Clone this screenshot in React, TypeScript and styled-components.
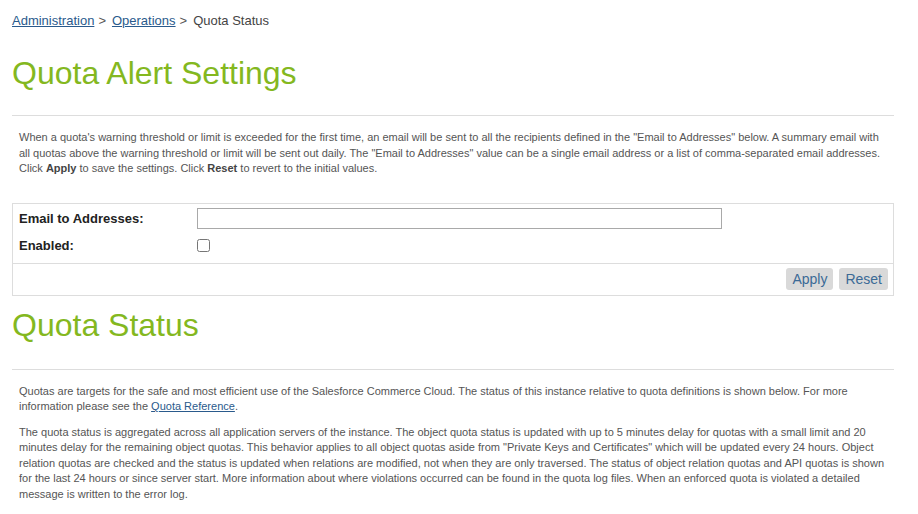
import React, { useState } from 'react';
import styled, { createGlobalStyle } from 'styled-components';

const GlobalStyle = createGlobalStyle`
  html, body {
    margin: 0;
    padding: 0;
    background: #ffffff;
    font-family: "Liberation Sans", Arial, sans-serif;
  }
`;

const Page = styled.div`
  width: 882px;
  padding: 13px 0 0 12px;
`;

const Breadcrumbs = styled.nav`
  font-size: 13px;
  line-height: 16px;
  color: #444;
`;

const Crumb = styled.a`
  color: #2a5a8c;
  text-decoration: underline;
`;

const Separator = styled.span`
  color: #555;
  margin: 0 6px 0 4px;
`;

const Title = styled.h1<{ $top: number; $gap: number }>`
  margin: ${({ $top }) => $top}px 0 0;
  padding-bottom: ${({ $gap }) => $gap}px;
  border-bottom: 1px solid #dddddd;
  font-size: 32px;
  line-height: 37px;
  font-weight: normal;
  color: #84b81f;
`;

const Text = styled.p<{ $top?: number }>`
  margin: ${({ $top }) => $top ?? 10}px 0 0;
  padding: 0 7px;
  font-size: 11px;
  line-height: 15.5px;
  color: #555;

  b {
    color: #444;
  }
`;

const TextLink = styled.a`
  color: #2a5a8c;
  text-decoration: underline;
`;

const FormBox = styled.div`
  margin-top: 26px;
  border: 1px solid #dddddd;
`;

const FormBody = styled.div`
  display: grid;
  grid-template-columns: 178px 1fr;
  row-gap: 5px;
  align-items: center;
  padding: 4px 6px 6px;
`;

const Label = styled.label`
  font-size: 13px;
  font-weight: bold;
  color: #222;
  line-height: 16px;
`;

const TextInput = styled.input`
  box-sizing: border-box;
  width: 525px;
  height: 21px;
  margin: 0;
  padding: 1px 4px;
  border: 1px solid #a9a9a9;
  font-family: inherit;
  font-size: 13px;
`;

const Field = styled.div`
  display: flex;
  align-items: center;
  height: 22px;
`;

const CheckBox = styled.input`
  width: 13px;
  height: 13px;
  margin: 0;
`;

const FormFooter = styled.div`
  display: flex;
  justify-content: flex-end;
  gap: 6px;
  padding: 4px 5px 5px;
  border-top: 1px solid #dddddd;
`;

const Button = styled.button`
  height: 22px;
  padding: 0 6px;
  border: none;
  border-radius: 3px;
  background: #d9d9d9;
  color: #3b6a96;
  font-family: inherit;
  font-size: 14px;
  cursor: pointer;
`;

const App = () => {
  const [emails, setEmails] = useState('');
  const [enabled, setEnabled] = useState(false);

  const reset = () => {
    setEmails('');
    setEnabled(false);
  };

  return (
    <Page>
      <GlobalStyle />
      <Breadcrumbs>
        <Crumb href="#">Administration</Crumb>
        <Separator>&gt;</Separator>
        <Crumb href="#">Operations</Crumb>
        <Separator>&gt;</Separator>
        Quota Status
      </Breadcrumbs>

      <Title $top={26} $gap={23}>Quota Alert Settings</Title>
      <Text $top={14}>
        When a quota's warning threshold or limit is exceeded for the first time, an email will be sent to all the
        recipients defined in the "Email to Addresses" below. A summary email with all quotas above the warning
        threshold or limit will be sent out daily. The "Email to Addresses" value can be a single email address or a
        list of comma-separated email addresses. Click <b>Apply</b> to save the settings. Click <b>Reset</b> to revert
        to the initial values.
      </Text>

      <FormBox>
        <FormBody>
          <Label htmlFor="emails">Email to Addresses:</Label>
          <Field>
            <TextInput id="emails" value={emails} onChange={(e) => setEmails(e.target.value)} />
          </Field>
          <Label htmlFor="enabled">Enabled:</Label>
          <Field>
            <CheckBox
              id="enabled"
              type="checkbox"
              checked={enabled}
              onChange={(e) => setEnabled(e.target.checked)}
            />
          </Field>
        </FormBody>
        <FormFooter>
          <Button>Apply</Button>
          <Button onClick={reset}>Reset</Button>
        </FormFooter>
      </FormBox>

      <Title $top={11} $gap={25}>Quota Status</Title>
      <Text $top={14}>
        Quotas are targets for the safe and most efficient use of the Salesforce Commerce Cloud. The status of this
        instance relative to quota definitions is shown below. For more information please see the{' '}
        <TextLink href="#">Quota Reference</TextLink>.
      </Text>
      <Text>
        The quota status is aggregated across all application servers of the instance. The object quota status is
        updated with up to 5 minutes delay for quotas with a small limit and 20 minutes delay for the remaining object
        quotas. This behavior applies to all object quotas aside from "Private Keys and Certificates" which will be
        updated every 24 hours. Object relation quotas are checked and the status is updated when relations are
        modified, not when they are only traversed. The status of object relation quotas and API quotas is shown for
        the last 24 hours or since server start. More information about where violations occurred can be found in the
        quota log files. When an enforced quota is violated a detailed message is written to the error log.
      </Text>
    </Page>
  );
};

export default App;
